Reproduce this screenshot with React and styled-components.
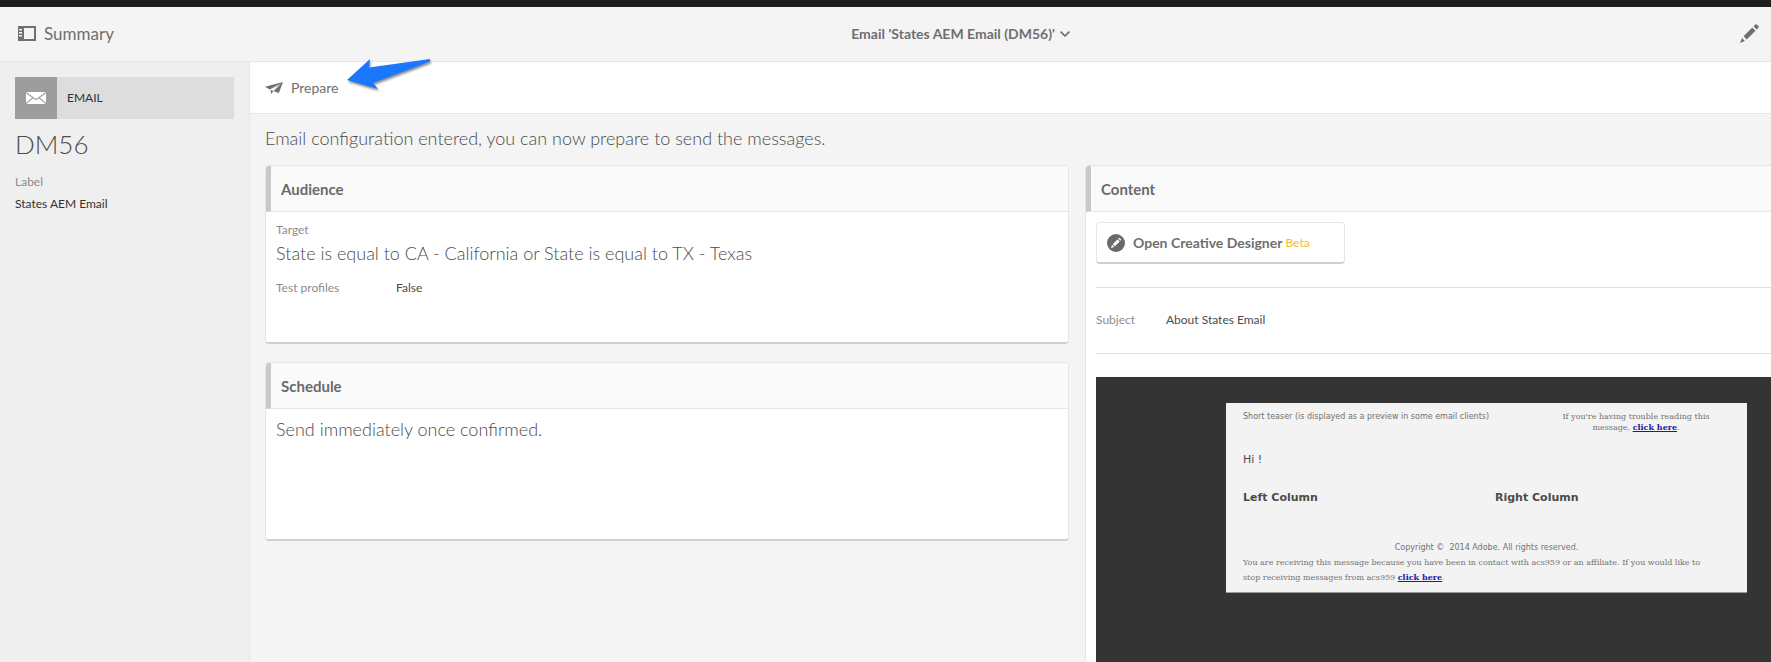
import React from "react";
import styled, { createGlobalStyle } from "styled-components";

const Global = createGlobalStyle`
  *, *::before, *::after { box-sizing: border-box; }
  html, body { margin: 0; padding: 0; }
  body {
    background: #f4f4f4;
    color: #4b4b4b;
    font-family: Lato, "Liberation Sans", sans-serif;
    font-size: 12px;
    line-height: 16px;
    overflow: hidden;
  }
  h1, h2, h3, p, dl, dt, dd { margin: 0; font-weight: 400; }
  button { border: 0; padding: 0; background: none; font: inherit; color: inherit; cursor: pointer; }
  svg { display: block; flex: none; }
`;

const Page = styled.div`
  display: flex;
  flex-direction: column;
  height: 100vh;
  overflow: hidden;
`;

const TopStrip = styled.div`
  flex: none;
  height: 7px;
  background: #1e1e1e;
`;

const Header = styled.header`
  flex: none;
  display: grid;
  grid-template-columns: 17fr auto 14fr;
  align-items: center;
  height: 55px;
  padding-bottom: 1px;
  border-bottom: 1px solid #e6e6e6;
  color: #6f6f6f;
`;

const RailToggle = styled.button`
  justify-self: start;
  display: flex;
  align-items: center;
  gap: 8px;
  margin-left: 18px;
  font-size: 17px;
  line-height: 20px;
`;

const TitleMenu = styled.button`
  display: flex;
  align-items: center;
  gap: 5px;
  font-size: 14px;
  line-height: 20px;
  font-weight: 700;
`;

const EditButton = styled.button`
  justify-self: end;
  margin-right: 12px;
`;

const Body = styled.div`
  flex: 1;
  display: flex;
  min-height: 0;
`;

const Sidebar = styled.aside`
  flex: none;
  width: 250px;
  padding: 15px;
  background: #efefef;
  border-right: 1px solid #e6e6e6;
`;

const TypeBadge = styled.div`
  display: flex;
  align-items: center;
  gap: 10px;
  height: 42px;
  background: #dddddd;
  color: #323232;
`;

const TypeIcon = styled.span`
  display: grid;
  place-items: center;
  width: 42px;
  height: 42px;
  background: #9d9d9d;
`;

const DeliveryId = styled.h1`
  margin-top: 9px;
  font-size: 26px;
  line-height: 32px;
  font-weight: 300;
`;

const LabelPair = styled.dl`
  margin-top: 14px;
`;

const Term = styled.dt`
  color: #8c8c8c;
`;

const Value = styled.dd`
  color: ${(p) => (p.$dark ? "#323232" : "#4b4b4b")};
  margin-top: ${(p) => (p.$stacked ? "6px" : "0")};
`;

const Main = styled.main`
  flex: 1;
  display: flex;
  flex-direction: column;
  min-width: 0;
`;

const Toolbar = styled.div`
  position: relative;
  flex: none;
  display: flex;
  align-items: center;
  height: 52px;
  padding-left: 15px;
  background: #ffffff;
  border-bottom: 1px solid #e6e6e6;
`;

const ToolButton = styled.button`
  display: flex;
  align-items: center;
  gap: 8px;
  color: #6f6f6f;
  font-size: 14px;
  line-height: 20px;
`;

const Pointer = styled.svg`
  position: absolute;
  left: 94px;
  top: -6px;
  overflow: visible;
  filter: drop-shadow(1px 2px 1px rgba(0, 0, 0, 0.45));
`;

const Status = styled.p`
  flex: none;
  padding: 12px 15px 15px;
  font-size: 18px;
  line-height: 24px;
  font-weight: 300;
`;

const Columns = styled.div`
  flex: 1;
  display: grid;
  grid-template-columns: 804fr 686fr;
  column-gap: 16px;
  min-height: 0;
  padding-left: 15px;
`;

const Stack = styled.div`
  display: flex;
  flex-direction: column;
  gap: 18px;
`;

const Card = styled.section`
  background: #ffffff;
  border: 1px solid #e6e6e6;
  border-bottom: 2px solid #d0d0d0;
  border-radius: 4px;
  min-height: 179px;
  overflow: hidden;
`;

const BleedCard = styled(Card)`
  border-right: 0;
  border-bottom: 0;
  border-radius: 4px 0 0 0;
  display: flex;
  flex-direction: column;
`;

const CardTitle = styled.h2`
  flex: none;
  height: 46px;
  padding: 13px 10px;
  background: #fafafa;
  border-left: 5px solid #c8c8c8;
  border-bottom: 1px solid #e6e6e6;
  color: #6a6a6a;
  font-size: 15px;
  line-height: 20px;
  font-weight: 700;
`;

const CardBody = styled.div`
  padding: 8px 10px;
`;

const Statement = styled.p`
  font-size: 18px;
  line-height: 24px;
  font-weight: 300;
`;

const Field = styled.dl`
  display: grid;
  grid-template-columns: ${(p) => p.$term}px 1fr;
  margin-top: 15px;
`;

const TargetLabel = styled.p`
  margin-top: 2px;
  margin-bottom: 3px;
  color: #8c8c8c;
`;

const ContentBody = styled.div`
  flex: 1;
  display: flex;
  flex-direction: column;
  padding: 10px 0 0 10px;
`;

const DesignerButton = styled.button`
  display: flex;
  align-items: center;
  width: 249px;
  height: 42px;
  padding: 0 10px;
  border: 1px solid #e6e6e6;
  border-bottom: 2px solid #d0d0d0;
  border-radius: 4px;
  background: #ffffff;
  color: #6f6f6f;
  font-size: 14px;
  font-weight: 700;
`;

const DesignerText = styled.span`
  margin: 0 3px 0 8px;
`;

const Beta = styled.span`
  color: #f5bd2c;
  font-size: 12px;
  font-weight: 400;
`;

const SubjectRow = styled.dl`
  display: grid;
  grid-template-columns: 70px 1fr;
  align-items: center;
  height: 67px;
  margin-top: 23px;
  padding-bottom: 2px;
  border-top: 1px solid #dedede;
  border-bottom: 1px solid #dedede;
`;

const Preview = styled.div`
  flex: 1;
  margin-top: 23px;
  padding: 26px 24px 0 130px;
  background: #343434;
`;

const Mail = styled.article`
  height: 190px;
  padding: 8px 17px;
  background: #f3f3f3;
  border-bottom: 1px solid #9a9a9a;
  color: #727272;
  font-family: "DejaVu Serif", serif;
  font-size: 8px;
  line-height: 15px;
`;

const MailTop = styled.div`
  display: flex;
  justify-content: space-between;
  line-height: 11px;
`;

const MailSans = styled.p`
  font-family: "DejaVu Sans", sans-serif;
  text-align: ${(p) => (p.$center ? "center" : "left")};
`;

const Trouble = styled.p`
  width: 188px;
  padding: 0 16px;
  text-align: center;
  white-space: nowrap;
`;

const Greeting = styled.p`
  margin-top: 19px;
  color: #4b4b4b;
  font-family: "DejaVu Sans", sans-serif;
  font-size: 11px;
  line-height: 16px;
`;

const MailColumns = styled.div`
  display: grid;
  grid-template-columns: 252px 1fr;
  margin: 22px 0 34px;
`;

const MailHeading = styled.h3`
  color: #4b4b4b;
  font-family: "DejaVu Sans", sans-serif;
  font-size: 11px;
  line-height: 16px;
  font-weight: 700;
`;

const MailLink = styled.a`
  color: #1a1aa6;
  font-weight: 700;
`;

const RailIcon = () => (
  <svg width="18" height="15" viewBox="0 0 18 15" fill="#6f6f6f">
    <path fillRule="evenodd" d="M0 0h18v15H0zM6 2v11h10V2zM1 3v1.500h3V3zM1 6v1.500h3V6zM1 9v1.500h3V9z" />
  </svg>
);

const ChevronIcon = () => (
  <svg width="10" height="6" viewBox="0 0 10 6" fill="none" stroke="#6f6f6f" strokeWidth="1.700">
    <path d="M.6.6 5 5 9.400.6" />
  </svg>
);

const PencilIcon = () => (
  <svg width="19" height="19" viewBox="0 0 19 19" fill="#6f6f6f">
    <path d="M0 19 2 14 4.900 17zM3.600 12.300 12.300 3.600 15.500 6.700 6.700 15.500zM13.500 2.300 15.300.6Q16-.1 16.700.5L18.500 2.300Q19.100 3 18.500 3.700L16.700 5.500z" />
  </svg>
);

const EnvelopeIcon = () => (
  <svg width="20" height="12" viewBox="0 0 20 12">
    <path d="M0 0h20v12H0z" fill="#fff" />
    <path d="M0 .5 8.600 6.700Q10 7.700 11.400 6.700L20 .5M0 11.500 7 5.700M20 11.500 13 5.700" fill="none" stroke="#9d9d9d" strokeWidth="1.100" />
  </svg>
);

const PlaneIcon = () => (
  <svg width="18" height="12" viewBox="0 0 18 12" fill="#6f6f6f">
    <path d="M0 4.800 18 0 4.800 7.500zM18 0 13.800 11 8.500 9 15.500 2.300 5.500 8zM5.500 8 8.500 9 6.200 12z" />
  </svg>
);

const DesignerIcon = () => (
  <svg width="18" height="18" viewBox="0 0 18 18">
    <circle cx="9" cy="9" r="9" fill="#6a6a6a" />
    <path d="M4 14 5 10.800 7.200 13zM5.700 10.200 10.600 5.300 12.700 7.400 7.800 12.300zM11.300 4.600 12.300 3.700 14.300 5.700 13.400 6.700z" fill="#fff" />
  </svg>
);

export default function App() {
  return (
    <Page>
      <Global />
      <TopStrip />
      <Header>
        <RailToggle>
          <RailIcon />
          Summary
        </RailToggle>
        <TitleMenu>
          Email 'States AEM Email (DM56)'
          <ChevronIcon />
        </TitleMenu>
        <EditButton aria-label="Edit properties">
          <PencilIcon />
        </EditButton>
      </Header>
      <Body>
        <Sidebar>
          <TypeBadge>
            <TypeIcon>
              <EnvelopeIcon />
            </TypeIcon>
            EMAIL
          </TypeBadge>
          <DeliveryId>DM56</DeliveryId>
          <LabelPair>
            <Term>Label</Term>
            <Value $dark $stacked>States AEM Email</Value>
          </LabelPair>
        </Sidebar>
        <Main>
          <Toolbar>
            <ToolButton>
              <PlaneIcon />
              Prepare
            </ToolButton>
            <Pointer width="88" height="36" viewBox="0 0 88 36">
              <path d="M3 24 26 3 25 11.500 86 3 86 5.500 29 27 34 33z" fill="#1a78ff" />
            </Pointer>
          </Toolbar>
          <Status>Email configuration entered, you can now prepare to send the messages.</Status>
          <Columns>
            <Stack>
              <Card>
                <CardTitle>Audience</CardTitle>
                <CardBody>
                  <TargetLabel>Target</TargetLabel>
                  <Statement>State is equal to CA - California or State is equal to TX - Texas</Statement>
                  <Field $term={120}>
                    <Term>Test profiles</Term>
                    <Value>False</Value>
                  </Field>
                </CardBody>
              </Card>
              <Card>
                <CardTitle>Schedule</CardTitle>
                <CardBody>
                  <Statement>Send immediately once confirmed.</Statement>
                </CardBody>
              </Card>
            </Stack>
            <BleedCard>
              <CardTitle>Content</CardTitle>
              <ContentBody>
                <DesignerButton>
                  <DesignerIcon />
                  <DesignerText>Open Creative Designer</DesignerText>
                  <Beta>Beta</Beta>
                </DesignerButton>
                <SubjectRow>
                  <Term>Subject</Term>
                  <Value>About States Email</Value>
                </SubjectRow>
                <Preview>
                  <Mail>
                    <MailTop>
                      <MailSans>Short teaser (is displayed as a preview in some email clients)</MailSans>
                      <Trouble>
                        If you're having trouble reading this
                        <br />
                        message, <MailLink href="#mirror">click here</MailLink>.
                      </Trouble>
                    </MailTop>
                    <Greeting>Hi !</Greeting>
                    <MailColumns>
                      <MailHeading>Left Column</MailHeading>
                      <MailHeading>Right Column</MailHeading>
                    </MailColumns>
                    <MailSans $center>Copyright © &nbsp;2014 Adobe. All rights reserved.</MailSans>
                    <p>
                      You are receiving this message because you have been in contact with acs959 or an affiliate. If you would like to
                      <br />
                      stop receiving messages from acs959 <MailLink href="#unsubscribe">click here</MailLink>.
                    </p>
                  </Mail>
                </Preview>
              </ContentBody>
            </BleedCard>
          </Columns>
        </Main>
      </Body>
    </Page>
  );
}
